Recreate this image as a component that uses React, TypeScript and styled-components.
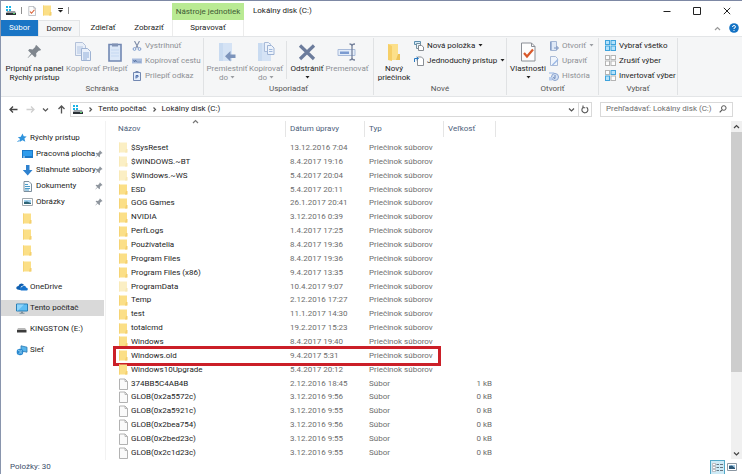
import React from 'react';
import styled, { createGlobalStyle, css } from 'styled-components';

const GlobalStyle = createGlobalStyle`
  * { box-sizing: border-box; }
  body { margin: 0; background: #fff; }
  body, button, input, table {
    font-family: Roboto, "Open Sans", sans-serif;
    font-size: 8px;
    line-height: 10px;
    color: #1c1c1c;
  }
  button { padding: 0; border: 0; background: none; white-space: nowrap; }
  a { color: inherit; text-decoration: none; }
  svg { display: block; flex: none; }
`;

/* ---------- Icons ---------- */

const DriveIcon = () => (
  <svg width="11" height="11" viewBox="0 0 11 11">
    <path d="M1 1h2v2H1zM4 1h2v2H4zM1 4h2v2H1zM4 4h2v2H4z" fill="#19b3e6" />
    <path d="M2 6h8l1 2H1z" fill="#9aa0a6" />
    <path d="M1 8h10v2H1z" fill="#2b3036" />
    <path d="M8 8h2v1H8z" fill="#59d36b" />
  </svg>
);

const CheckDocIcon = ({ size = 10 }: { size?: number }) => (
  <svg width={size} height={size} viewBox="0 0 20 20">
    <path d="M3.500 1h10L17 4.500V19H3.500z" fill="#fdfdfd" stroke="#8b8f96" />
    <path d="M13.500 1v3.500H17" fill="none" stroke="#8b8f96" />
    <path d="M6 11l3 3.500 6-7" fill="none" stroke="#d9592b" strokeWidth="2.200" />
  </svg>
);

const FolderIcon = ({ pale = false }: { pale?: boolean }) => (
  <svg width="11" height="11" viewBox="0 0 11 11">
    <path d="M1 .5h8v10H1z" fill={pale ? '#fbefc4' : '#fbdf87'} />
    <path d="M1 .5h1v10H1z" fill={pale ? '#f9eab8' : '#f6d474'} />
    <path d="M8 7h1.500v3.500H7z" fill={pale ? '#f8e8b4' : '#f4cf6c'} />
  </svg>
);

const BigFolderIcon = () => (
  <svg width="14" height="20" viewBox="0 0 14 20">
    <path d="M1 2h10v10h2v6H1z" fill="#fce08b" />
    <path d="M1 2l4 2v15l-4-1z" fill="#f6cf68" />
    <path d="M11 12h2v6h-4z" fill="#edc35a" />
  </svg>
);

const FileIcon = () => (
  <svg width="11" height="12" viewBox="0 0 11 12">
    <path d="M1.500 1h5.500l2.500 2.500v8h-8z" fill="#fafafa" stroke="#a9a9a9" strokeWidth=".9" />
    <path d="M7 1v2.500h2.500" fill="none" stroke="#a9a9a9" strokeWidth=".8" />
  </svg>
);

const PinIcon = ({ size = 8, color = '#8f969e' }: { size?: number; color?: string }) => (
  <svg width={size} height={size} viewBox="0 0 16 16">
    <path d="M10 1l5 5-1.200 1.200-1-.3-3 3 .2 3-1.400 1.400L5.200 10.800 1 15l-.300-.300 3.700-4.700L1.200 6.800 2.600 5.400l3.400.4 3-3L8.800 2z" fill={color} />
  </svg>
);

const CopyIcon = () => (
  <svg width="18" height="20" viewBox="0 0 18 20">
    <path d="M1.500.5h7l3 3v10h-10z" fill="#e9eff8" stroke="#b3c1d9" />
    <path d="M3 5h6M3 7h6M3 9h5M3 11h5" stroke="#b3c6e4" />
    <path d="M7.500 6.500h6l3 3v9h-9z" fill="#eaf1fb" stroke="#9fb3d3" />
    <path d="M9 11h6M9 13h6M9 15h6M9 17h4" stroke="#8fadd9" />
  </svg>
);

const PasteIcon = () => (
  <svg width="14" height="20" viewBox="0 0 14 20">
    <path d="M1 2.500h12V19H1z" fill="#dce8f8" stroke="#7288b2" strokeWidth="1.600" />
    <path d="M4 1.500h6v3H4z" fill="#8193b5" />
    <path d="M3 8h8M3 11h8M3 14h8" stroke="#c5d8f1" />
  </svg>
);

const CutIcon = () => (
  <svg width="10" height="10" viewBox="0 0 10 10">
    <path d="M2.500 0l3.700 7M7.500 0L3.800 7" stroke="#7e8ca8" strokeWidth="1.100" fill="none" />
    <circle cx="2.500" cy="8" r="1.400" fill="none" stroke="#7e9cce" />
    <circle cx="7.500" cy="8" r="1.400" fill="none" stroke="#7e9cce" />
  </svg>
);

const PathIcon = () => (
  <svg width="10" height="10" viewBox="0 0 10 10">
    <path d="M0 2.500h10v5H0z" fill="#a9bcdd" />
    <path d="M1.500 4l1 2 1-2 1 2M5.500 6h1M7.500 6h1" stroke="#4d6899" strokeWidth=".8" fill="none" />
  </svg>
);

const PasteLinkIcon = () => (
  <svg width="10" height="10" viewBox="0 0 10 10">
    <path d="M1.500 1.500h7v8h-7z" fill="#e5eefb" stroke="#7288b2" />
    <path d="M3.500 0h3v2h-3z" fill="#7288b2" />
    <path d="M4 7.500V4.500h2v1.500H4" stroke="#4d6fac" fill="none" />
  </svg>
);

const MoveIcon = () => (
  <svg width="18" height="20" viewBox="0 0 18 20">
    <path d="M1 1h13v18H1z" fill="#d5e3f5" />
    <path d="M1 1h4v18H1z" fill="#c9dbf1" />
    <path d="M7 14.200L12.500 9v3.500H17.500v3.500H12.500v3.500z" fill="#7d94bb" />
  </svg>
);

const CopyToIcon = () => (
  <svg width="18" height="20" viewBox="0 0 18 20">
    <path d="M1 1h13v18H1z" fill="#d5e3f5" />
    <path d="M1 1h4v18H1z" fill="#c9dbf1" />
    <path d="M7.500.5h4l2 2v7h-6z" fill="#edf3fb" stroke="#a9bbd8" />
    <path d="M10.500 3.500h4l2.500 2.500v6.500h-6.500z" fill="#edf3fb" stroke="#9eb3d5" />
    <path d="M12 7.500h3.500M12 9.500h3.500" stroke="#a0b8dc" />
  </svg>
);

const DeleteIcon = () => (
  <svg width="18" height="20" viewBox="0 0 18 20">
    <path d="M2 3.500L16 17M16 3.500L2 17" stroke="#6c7c9c" strokeWidth="3.200" />
  </svg>
);

const RenameIcon = () => (
  <svg width="20" height="20" viewBox="0 0 20 20">
    <path d="M1 7.500h17v6H1z" fill="#e4edf9" stroke="#a9bbda" />
    <path d="M3 9.500h9v2.500H3z" fill="#7c9bd0" />
    <path d="M12.500 2q2.500 0 2.500 2v12q0 2-2.500 2M18 2q-3 0-3 2M18 18q-3 0-3-2" stroke="#74809a" strokeWidth="1.300" fill="none" />
  </svg>
);

const NewItemIcon = () => (
  <svg width="10" height="10" viewBox="0 0 10 10">
    <path d="M.5.5h6v3h-6z" fill="#d6ebf8" stroke="#5c8fae" />
    <path d="M2.500 2.500h4v5h-4z" fill="#e9f4fb" stroke="#77909f" />
    <path d="M4.500 4.500h3l2 1.500v3.500h-5z" fill="#fff" stroke="#868b90" />
  </svg>
);

const EasyAccessIcon = () => (
  <svg width="10" height="10" viewBox="0 0 10 10">
    <path d="M3.500 1h4l2 2v6.500h-6z" fill="#fff" stroke="#8a8f95" />
    <path d="M.5 6V2.500H4M2.500 1L4.500 2.500 2.500 4" stroke="#2b7ac2" fill="none" />
  </svg>
);

const OpenIcon = () => (
  <svg width="10" height="10" viewBox="0 0 10 10">
    <path d="M1.500.5h6v9h-6z" fill="#dfe9f7" stroke="#a4b6d4" />
    <path d="M1 2h2M1 4h2M1 6h2M1 8h2" stroke="#6b88ba" />
    <path d="M5 7h4M7.500 5L9.500 7 7.500 9" stroke="#7892bf" fill="none" />
  </svg>
);

const EditIcon = () => (
  <svg width="10" height="10" viewBox="0 0 10 10">
    <path d="M1.500.5h5l2 2v7h-7z" fill="#f0f5fc" stroke="#a9bad6" />
    <path d="M3 8.500L8.500 3l1 1L4 9.500H3z" fill="#9db9e5" />
  </svg>
);

const HistoryIcon = () => (
  <svg width="10" height="10" viewBox="0 0 10 10">
    <path d="M0 1h5l1 2H0z" fill="#c4d5ee" />
    <circle cx="6" cy="6" r="3.500" fill="#d6e3f5" stroke="#8aa3cf" />
    <path d="M4 6.500l2 1V4" stroke="#6a86b7" fill="none" />
    <path d="M0 6h3v3.500H0z" fill="#b9cdec" />
  </svg>
);

const SelectIcon = ({ kind }: { kind: 'all' | 'none' | 'invert' }) => {
  const on = { fill: '#b5e2fb', stroke: '#3fa3dc' };
  const off = { fill: '#fdfdfd', stroke: '#b4b4b4' };
  const cell = (lit: boolean) => (lit ? on : off);
  return (
    <svg width="11" height="11" viewBox="0 0 11 11">
      <rect x=".5" y=".5" width="4" height="4" {...cell(kind === 'all')} />
      <rect x="6" y=".5" width="4.500" height="4" {...cell(kind !== 'none')} />
      <rect x=".5" y="6" width="4" height="4.500" {...cell(kind !== 'none')} />
      <rect x="6" y="6" width="4.500" height="4.500" {...cell(kind === 'all')} />
    </svg>
  );
};

const Caret = ({ color = '#222' }: { color?: string }) => (
  <svg width="5" height="3" viewBox="0 0 5 3">
    <path d="M.5 0h4L2.500 2.500z" fill={color} />
  </svg>
);

const MenuCaret = () => (
  <svg width="5" height="5" viewBox="0 0 5 5">
    <path d="M0 .5h5" stroke="#222" />
    <path d="M0 2h5L2.500 4.500z" fill="#222" />
  </svg>
);

const Chevron = ({ dir, size = 7, color = '#555' }: { dir: 'up' | 'down' | 'right'; size?: number; color?: string }) => {
  const paths = { up: 'M1 5l2.500-2.500L6 5', down: 'M1 2.500L3.500 5 6 2.500', right: 'M2.500 1.500L4.500 3.500l-2 2' };
  return (
    <svg width={size} height={size} viewBox="0 0 7 7">
      <path d={paths[dir]} fill="none" stroke={color} strokeWidth="1.200" />
    </svg>
  );
};

const Arrow = ({ dir, color }: { dir: 'left' | 'right' | 'up'; color: string }) => {
  const paths = {
    left: 'M8.500 4.500H1M4 1.500l-3 3 3 3',
    right: 'M.5 4.500H8M5 1.500l3 3-3 3',
    up: 'M4.500 8.500V1M1.500 4l3-3 3 3',
  };
  return (
    <svg width="9" height="9" viewBox="0 0 9 9">
      <path d={paths[dir]} fill="none" stroke={color} strokeWidth="1.300" />
    </svg>
  );
};

const RefreshIcon = () => (
  <svg width="8" height="9" viewBox="0 0 8 9">
    <path d="M5.500 2.300A3 3 0 1 1 2 2.500M2 .5v2.300h2.300" fill="none" stroke="#555" strokeWidth="1.100" />
  </svg>
);

const SearchIcon = () => (
  <svg width="8" height="8" viewBox="0 0 8 8">
    <circle cx="4.800" cy="3" r="2.300" fill="none" stroke="#555" />
    <path d="M3 4.800L.7 7.300" stroke="#555" strokeWidth="1.200" />
  </svg>
);

const StarIcon = () => (
  <svg width="10" height="10" viewBox="0 0 10 10">
    <path d="M5.500.5l1.200 2.800 3 .2-2.300 2 .9 3.200-2.800-1.500L2.500 9l.6-3L.8 4.300l3-.6z" fill="#2f93dc" />
    <path d="M3 6.500L.5 9" stroke="#2f93dc" />
  </svg>
);

const DesktopIcon = () => (
  <svg width="11" height="10" viewBox="0 0 11 10">
    <path d="M0 1h11v8H0z" fill="#1b78c8" />
    <path d="M1 2h9v5H1z" fill="#2f9cec" />
    <path d="M1 8h2" stroke="#d8ecfb" />
  </svg>
);

const DownloadIcon = () => (
  <svg width="11" height="11" viewBox="0 0 11 11">
    <path d="M4 0h3.500v5h3L5.700 10.500.8 5H4z" fill="#2f82cf" />
  </svg>
);

const DocumentIcon = () => (
  <svg width="11" height="11" viewBox="0 0 11 11">
    <path d="M2 .5h5L9.500 3v7.500H2z" fill="#f7fbfe" stroke="#7d8f9d" />
    <path d="M3 3.500h3M3 5.500h5M3 7.500h5M3 9h4" stroke="#4a9cc9" />
  </svg>
);

const PictureIcon = () => (
  <svg width="11" height="10" viewBox="0 0 11 10">
    <path d="M.5 1.500h10v7H.5z" fill="#fff" stroke="#a1a8ad" />
    <path d="M2 3h7v4H2z" fill="#9fd0ee" />
    <path d="M2 5l3-.5L9 6v1H2z" fill="#2f6475" />
  </svg>
);

const CloudIcon = () => (
  <svg width="12" height="8" viewBox="0 0 12 8">
    <path d="M1.500 6.500Q0 6 .3 4.500T2.500 3Q3 .5 5.300.5T8 2L5 3.500 4 7z" fill="#0f5fb0" />
    <path d="M5 7.500Q3.500 7 4 5.500T6 4Q7 2.300 8.600 2.800T10 4.500q2 .2 1.800 1.700T10.500 7.500z" fill="#1673cc" />
  </svg>
);

const ComputerIcon = () => (
  <svg width="12" height="11" viewBox="0 0 12 11">
    <path d="M.5 1h11v7H.5z" fill="#5fbdf3" stroke="#2a7fb5" />
    <path d="M1 1.500h7l-6 6H1z" fill="#8fd4fa" />
    <path d="M5 8.500h2V10H5zM3.500 9.800h5v.9h-5z" fill="#7f919d" />
  </svg>
);

const UsbIcon = () => (
  <svg width="11" height="10" viewBox="0 0 11 10">
    <path d="M2 4h7l1.500 2H1z" fill="#b8b8b8" />
    <path d="M1 6h9.500v2.500H1z" fill="#3c3c3c" />
  </svg>
);

const NetworkIcon = () => (
  <svg width="12" height="11" viewBox="0 0 12 11">
    <path d="M5 .8l6 1.400v5L5 6z" fill="#58b4ea" stroke="#2b79b3" strokeWidth=".8" />
    <circle cx="4" cy="7" r="3.300" fill="#2a88cf" />
    <path d="M2 5q2 2 4 .8M2.500 9q1-2 3.500-1" stroke="#9fdcf8" fill="none" strokeWidth=".9" />
  </svg>
);

const DetailsIcon = () => (
  <svg width="11" height="9" viewBox="0 0 11 9">
    <path d="M.5.5h3v2h-3zM.5 3.500h3v2h-3zM.5 6.500h3v2h-3z" fill="#fff" stroke="#a29aa0" strokeWidth=".6" />
    <path d="M4.500 1.500h2.500M8 1.500h3M4.500 4.500h2.500M8 4.500h3M4.500 7.500h2.500M8 7.500h3" stroke="#66747f" />
  </svg>
);

const TilesIcon = () => (
  <svg width="10" height="8" viewBox="0 0 10 8">
    <path d="M.5.5h9v7h-9z" fill="#fff" stroke="#8b98a3" />
    <path d="M2 2h6v4H2z" fill="#a9cfe8" />
    <path d="M2 3l3-.5L8 5v1H2z" fill="#2d5878" />
  </svg>
);

/* ---------- Window and title area ---------- */

const Window = styled.main`
  display: flex;
  flex-direction: column;
  height: 100vh;
  min-width: 700px;
  border-top: 1px solid #7d88a4;
  border-left: 1px solid #8995ad;
  background: #fff;
`;

const Header = styled.header`
  display: flex;
  height: 35px;
  flex: none;
`;

const TabSide = styled.div`
  width: 171px;
`;

const QuickBar = styled.div`
  display: flex;
  align-items: center;
  gap: 5px;
  height: 19px;
  padding-left: 4px;
`;

const Rule = styled.span`
  width: 1px;
  height: 7px;
  background: #8f8f8f;
`;

const IconButton = styled.button`
  display: flex;
  align-items: center;
  justify-content: center;
`;

const TabRow = styled.div`
  display: flex;
  height: 16px;
`;

const Tab = styled.button<{ $kind?: 'file' | 'active' }>`
  width: ${(p) => (p.$kind === 'file' ? 37 : p.$kind === 'active' ? 42 : 46)}px;
  ${(p) => p.$kind === 'file' && css`background: #1a75c5; color: #fff;`}
  ${(p) =>
    p.$kind === 'active' &&
    css`
      background: #f5f6f7;
      border: 1px solid #e2e4e6;
      border-bottom: 0;
    `}
`;

const ContextTab = styled.div`
  display: flex;
  flex-direction: column;
  width: 72px;
  padding-top: 2px;
`;

const ContextTitle = styled.div`
  height: 17px;
  line-height: 17px;
  background: #b9ea93;
  color: #3f5a35;
  text-align: center;
  white-space: nowrap;
`;

const ContextButton = styled.button`
  flex: 1;
  border: solid #ececec;
  border-width: 0 1px;
`;

const TitleSide = styled.div`
  flex: 1;
`;

const TitleRow = styled.div`
  display: flex;
  align-items: center;
  height: 19px;
  padding-left: 9px;
`;

const Title = styled.h1`
  flex: 1;
  margin: 0;
  font-size: 8px;
  font-weight: 400;
`;

const WindowButton = styled(IconButton)`
  width: 30px;
  height: 18px;
`;

const HelpRow = styled.div`
  display: flex;
  align-items: center;
  justify-content: flex-end;
  gap: 8px;
  height: 16px;
  padding-right: 3px;
`;

/* ---------- Ribbon ---------- */

const Ribbon = styled.div`
  display: flex;
  flex: none;
  height: 61px;
  background: #f5f6f7;
  border: solid #e3e5e7;
  border-width: 1px 0;
`;

const Group = styled.section<{ $width: number }>`
  display: flex;
  flex-direction: column;
  width: ${(p) => p.$width}px;
  margin: 1px 0;
  border-right: 1px solid #e0e2e4;
`;

const Tools = styled.div`
  display: flex;
  flex: 1;
  padding-left: 3px;
`;

const GroupName = styled.h2`
  height: 12px;
  margin: 0;
  font-size: 8px;
  font-weight: 400;
  line-height: 12px;
  color: #555;
  text-align: center;
`;

const BigButton = styled.button<{ $width: number; $off?: boolean }>`
  display: flex;
  flex: none;
  flex-direction: column;
  align-items: center;
  width: ${(p) => p.$width}px;
  padding-top: 3px;
  line-height: 9px;
  color: ${(p) => (p.$off ? '#8d9095' : '#1c1c1c')};
`;

const BigIcon = styled.span`
  display: flex;
  align-items: center;
  justify-content: center;
  height: 21px;
  margin-bottom: 2px;
`;

const Line = styled.span`
  display: flex;
  align-items: center;
  justify-content: center;
  gap: 2px;
  height: 9px;
`;

const SmallStack = styled.div`
  display: flex;
  flex-direction: column;
  align-items: flex-start;
  padding-left: 3px;
`;

const SmallButton = styled.button<{ $off?: boolean }>`
  display: flex;
  align-items: center;
  gap: 3px;
  height: 15px;
  color: ${(p) => (p.$off ? '#8d9095' : '#1c1c1c')};
`;

const ToolRule = styled.span`
  width: 1px;
  height: 38px;
  margin: 3px 1px 0;
  background: #e0e2e4;
`;

/* ---------- Address row ---------- */

const AddressRow = styled.div`
  display: flex;
  align-items: center;
  flex: none;
  height: 24px;
  padding-right: 9px;
`;

const NavButtons = styled.div`
  display: flex;
  align-items: center;
  justify-content: space-between;
  width: 69px;
  padding: 0 4px 0 8px;
`;

const PathBox = styled.nav`
  display: flex;
  align-items: center;
  flex: 1;
  gap: 4px;
  height: 15px;
  padding-left: 1px;
  border: 1px solid #d9d9d9;
`;

const PathEnd = styled.span`
  display: flex;
  align-items: center;
  height: 100%;
  margin-left: auto;
`;

const RefreshButton = styled(IconButton)`
  width: 13px;
  height: 13px;
  margin-left: 3px;
  border-left: 1px solid #d9d9d9;
`;

const SearchBox = styled.label`
  display: flex;
  align-items: center;
  width: 133px;
  height: 15px;
  margin-left: 8px;
  padding: 0 5px;
  border: 1px solid #d9d9d9;
`;

const SearchInput = styled.input`
  flex: 1;
  min-width: 0;
  padding: 0;
  border: 0;
  outline: 0;
  background: none;
  &::placeholder { color: #6d6d6d; opacity: 1; }
`;

/* ---------- Body ---------- */

const Body = styled.div`
  display: flex;
  flex: 1;
  min-height: 0;
`;

const Sidebar = styled.nav`
  width: 105px;
  flex: none;
  padding-top: 9px;
  border-right: 1px solid #f2f2f2;
`;

const SideList = styled.ul`
  margin: 0;
  padding: 0;
  list-style: none;
`;

const SideLink = styled.a<{ $nested?: boolean; $spaced?: boolean; $selected?: boolean }>`
  display: flex;
  align-items: center;
  gap: 3px;
  height: 16px;
  margin-right: 1px;
  margin-top: ${(p) => (p.$spaced ? 5 : 0)}px;
  padding-left: ${(p) => (p.$nested ? 21 : 15)}px;
  background: ${(p) => (p.$selected ? '#d9d9d9' : 'none')};
`;

const SideIcon = styled.span`
  display: flex;
  justify-content: center;
  width: 11px;
`;

const SideText = styled.span<{ $pinned?: boolean }>`
  width: ${(p) => (p.$pinned ? '56px' : 'auto')};
  white-space: nowrap;
`;

const Content = styled.section`
  flex: 1;
  min-width: 0;
  padding-left: 7px;
`;

const FileTable = styled.table`
  height: 100%;
  border-collapse: collapse;
  table-layout: fixed;
  width: 383px;
`;

const HeadCell = styled.th<{ $width: number }>`
  width: ${(p) => p.$width}px;
  height: 20px;
  padding: 0;
  vertical-align: top;
  text-align: left;
  font-weight: 400;
`;

const HeadButton = styled.button<{ $first?: boolean }>`
  position: relative;
  display: block;
  width: 100%;
  height: 16px;
  padding-left: ${(p) => (p.$first ? 5 : 4)}px;
  border-right: 1px solid #e5e5e5;
  text-align: left;
  color: #4c607a;
`;

const SortMark = styled.span`
  position: absolute;
  top: -3px;
  left: 46%;
`;

const FileRow = styled.tr`
  position: relative;
`;

const Cell = styled.td<{ $right?: boolean }>`
  padding: 0 ${(p) => (p.$right ? 4 : 0)}px 0 4px;
  color: #6d6d6d;
  text-align: ${(p) => (p.$right ? 'right' : 'left')};
  white-space: nowrap;
`;

const NameCell = styled.td`
  padding: 0 0 0 5px;
`;

const FileName = styled.a`
  display: flex;
  align-items: center;
  gap: 2px;
  height: 12px;
  white-space: nowrap;
`;

const Highlight = styled.span`
  position: absolute;
  top: -3px;
  bottom: -3px;
  left: 0;
  width: 328px;
  border: 3px solid #cb1f28;
  pointer-events: none;
`;

const ScrollBar = styled.div`
  display: flex;
  flex-direction: column;
  flex: none;
  width: 11px;
  margin-bottom: 1px;
  background: #f0f0f0;
`;

const ScrollButton = styled(IconButton)`
  height: 11px;
`;

const ScrollTrack = styled.div`
  flex: 1;
`;

const ScrollThumb = styled.div`
  height: 76%;
  background: #cdcdcd;
`;

const StatusBar = styled.footer`
  display: flex;
  align-items: center;
  flex: none;
  height: 14px;
  padding: 0 5px 0 9px;
  color: #3d4f6b;
`;

const ViewButtons = styled.div`
  display: flex;
  align-items: center;
  gap: 2px;
  margin-left: auto;
`;

const ViewButton = styled(IconButton)<{ $on?: boolean }>`
  height: 15px;
  width: ${(p) => (p.$on ? 15 : 10)}px;
  ${(p) => p.$on && css`border: 1px solid #52a8c8; background: #cdeaf6;`}
`;

/* ---------- Data ---------- */

type Entry = { name: string; date: string; size?: string; pale?: boolean; marked?: boolean };

const entries: Entry[] = [
  { name: '$SysReset', date: '13.12.2016 7:04', pale: true },
  { name: '$WINDOWS.~BT', date: '8.4.2017 19:16', pale: true },
  { name: '$Windows.~WS', date: '5.4.2017 20:04', pale: true },
  { name: 'ESD', date: '5.4.2017 20:11' },
  { name: 'GOG Games', date: '26.1.2017 20:41' },
  { name: 'NVIDIA', date: '3.12.2016 0:39' },
  { name: 'PerfLogs', date: '1.4.2017 17:25' },
  { name: 'Používatelia', date: '8.4.2017 19:36' },
  { name: 'Program Files', date: '8.4.2017 19:36' },
  { name: 'Program Files (x86)', date: '9.4.2017 13:35' },
  { name: 'ProgramData', date: '10.4.2017 9:07', pale: true },
  { name: 'Temp', date: '2.12.2016 17:27' },
  { name: 'test', date: '11.1.2017 14:30' },
  { name: 'totalcmd', date: '19.2.2017 15:23' },
  { name: 'Windows', date: '8.4.2017 19:40' },
  { name: 'Windows.old', date: '9.4.2017 5:31', marked: true },
  { name: 'Windows10Upgrade', date: '5.4.2017 20:12' },
  { name: '374BB5C4AB4B', date: '2.12.2016 18:45', size: '1 kB' },
  { name: 'GLOB(0x2a5572c)', date: '3.12.2016 9:56', size: '0 kB' },
  { name: 'GLOB(0x2a5921c)', date: '3.12.2016 9:55', size: '0 kB' },
  { name: 'GLOB(0x2bea754)', date: '3.12.2016 9:56', size: '0 kB' },
  { name: 'GLOB(0x2bed23c)', date: '3.12.2016 9:55', size: '0 kB' },
  { name: 'GLOB(0x2c1d23c)', date: '3.12.2016 9:55', size: '0 kB' },
];

type Place = {
  label: string;
  icon: React.ReactNode;
  nested?: boolean;
  pinned?: boolean;
  spaced?: boolean;
  selected?: boolean;
};

const places: Place[] = [
  { label: 'Rýchly prístup', icon: <StarIcon /> },
  { label: 'Pracovná plocha', icon: <DesktopIcon />, nested: true, pinned: true },
  { label: 'Stiahnuté súbory', icon: <DownloadIcon />, nested: true, pinned: true },
  { label: 'Dokumenty', icon: <DocumentIcon />, nested: true, pinned: true },
  { label: 'Obrázky', icon: <PictureIcon />, nested: true, pinned: true },
  { label: '', icon: <FolderIcon />, nested: true },
  { label: '', icon: <FolderIcon />, nested: true },
  { label: '', icon: <FolderIcon />, nested: true },
  { label: '', icon: <FolderIcon />, nested: true },
  { label: 'OneDrive', icon: <CloudIcon />, spaced: true },
  { label: 'Tento počítač', icon: <ComputerIcon />, spaced: true, selected: true },
  { label: 'KINGSTON (E:)', icon: <UsbIcon />, spaced: true },
  { label: 'Sieť', icon: <NetworkIcon />, spaced: true },
];

/* ---------- Composed parts ---------- */

type BigToolProps = {
  icon: React.ReactNode;
  width: number;
  label: string;
  second?: string;
  caret?: boolean;
  off?: boolean;
};

const BigTool = ({ icon, width, label, second, caret, off }: BigToolProps) => (
  <BigButton $width={width} $off={off}>
    <BigIcon>{icon}</BigIcon>
    <Line>{label}</Line>
    {(second || caret) && (
      <Line>
        {second}
        {caret && <Caret color={off ? '#9a9da2' : '#222'} />}
      </Line>
    )}
  </BigButton>
);

type SmallToolProps = { icon: React.ReactNode; label: string; caret?: boolean; off?: boolean };

const SmallTool = ({ icon, label, caret, off }: SmallToolProps) => (
  <SmallButton $off={off}>
    {icon}
    {label}
    {caret && <Caret color={off ? '#9a9da2' : '#222'} />}
  </SmallButton>
);

export default function App() {
  return (
    <>
      <GlobalStyle />
      <Window>
        <Header>
          <TabSide>
            <QuickBar>
              <DriveIcon />
              <Rule />
              <IconButton aria-label="Vlastnosti"><CheckDocIcon /></IconButton>
              <IconButton aria-label="Nový priečinok"><FolderIcon /></IconButton>
              <IconButton aria-label="Prispôsobiť panel"><MenuCaret /></IconButton>
              <Rule />
            </QuickBar>
            <TabRow>
              <Tab $kind="file">Súbor</Tab>
              <Tab $kind="active">Domov</Tab>
              <Tab>Zdieľať</Tab>
              <Tab>Zobraziť</Tab>
            </TabRow>
          </TabSide>
          <ContextTab>
            <ContextTitle>Nástroje jednotiek</ContextTitle>
            <ContextButton>Spravovať</ContextButton>
          </ContextTab>
          <TitleSide>
            <TitleRow>
              <Title>Lokálny disk (C:)</Title>
              <WindowButton aria-label="Minimalizovať">
                <svg width="8" height="8" viewBox="0 0 8 8"><path d="M.5 4.500h7" stroke="#222" /></svg>
              </WindowButton>
              <WindowButton aria-label="Maximalizovať">
                <svg width="8" height="8" viewBox="0 0 8 8"><path d="M.5.5h7v7h-7z" fill="none" stroke="#222" /></svg>
              </WindowButton>
              <WindowButton aria-label="Zavrieť">
                <svg width="8" height="8" viewBox="0 0 8 8"><path d="M.8.8l6.400 6.400M7.200.8L.8 7.200" stroke="#222" /></svg>
              </WindowButton>
            </TitleRow>
            <HelpRow>
              <IconButton aria-label="Zbaliť pás"><Chevron dir="up" color="#999" /></IconButton>
              <IconButton aria-label="Pomocník">
                <svg width="10" height="10" viewBox="0 0 10 10">
                  <circle cx="5" cy="5" r="4.800" fill="#1372c4" />
                  <path d="M3.500 4q0-1.500 1.500-1.500T6.500 3.800 5 5.200v.8M5 7v1" stroke="#fff" fill="none" />
                </svg>
              </IconButton>
            </HelpRow>
          </TitleSide>
        </Header>

        <Ribbon>
          <Group $width={203}>
            <Tools>
              <BigTool icon={<PinIcon size={15} color="#7f868e" />} width={61} label="Pripnúť na panel" second="Rýchly prístup" />
              <BigTool icon={<CopyIcon />} width={36} label="Kopírovať" off />
              <BigTool icon={<PasteIcon />} width={28} label="Prilepiť" off />
              <SmallStack>
                <SmallTool icon={<CutIcon />} label="Vystrihnúť" off />
                <SmallTool icon={<PathIcon />} label="Kopírovať cestu" off />
                <SmallTool icon={<PasteLinkIcon />} label="Prilepiť odkaz" off />
              </SmallStack>
            </Tools>
            <GroupName>Schránka</GroupName>
          </Group>
          <Group $width={170}>
            <Tools>
              <BigTool icon={<MoveIcon />} width={40} label="Premiestniť" second="do" caret off />
              <BigTool icon={<CopyToIcon />} width={38} label="Kopírovať" second="do" caret off />
              <ToolRule />
              <BigTool icon={<DeleteIcon />} width={38} label="Odstrániť" caret />
              <BigTool icon={<RenameIcon />} width={42} label="Premenovať" off />
            </Tools>
            <GroupName>Usporiadať</GroupName>
          </Group>
          <Group $width={133}>
            <Tools>
              <BigTool icon={<BigFolderIcon />} width={34} label="Nový" second="priečinok" />
              <SmallStack>
                <SmallTool icon={<NewItemIcon />} label="Nová položka" caret />
                <SmallTool icon={<EasyAccessIcon />} label="Jednoduchý prístup" caret />
              </SmallStack>
            </Tools>
            <GroupName>Nové</GroupName>
          </Group>
          <Group $width={92}>
            <Tools>
              <BigTool icon={<CheckDocIcon size={20} />} width={36} label="Vlastnosti" caret />
              <SmallStack>
                <SmallTool icon={<OpenIcon />} label="Otvoriť" caret off />
                <SmallTool icon={<EditIcon />} label="Upraviť" off />
                <SmallTool icon={<HistoryIcon />} label="História" off />
              </SmallStack>
            </Tools>
            <GroupName>Otvoriť</GroupName>
          </Group>
          <Group $width={79}>
            <Tools>
              <SmallStack>
                <SmallTool icon={<SelectIcon kind="all" />} label="Vybrať všetko" />
                <SmallTool icon={<SelectIcon kind="none" />} label="Zrušiť výber" />
                <SmallTool icon={<SelectIcon kind="invert" />} label="Invertovať výber" />
              </SmallStack>
            </Tools>
            <GroupName>Vybrať</GroupName>
          </Group>
        </Ribbon>

        <AddressRow>
          <NavButtons>
            <IconButton aria-label="Naspäť"><Arrow dir="left" color="#444" /></IconButton>
            <IconButton aria-label="Dopredu"><Arrow dir="right" color="#cfcfcf" /></IconButton>
            <IconButton aria-label="Posledné umiestnenia"><Chevron dir="down" /></IconButton>
            <IconButton aria-label="Nahor"><Arrow dir="up" color="#555" /></IconButton>
          </NavButtons>
          <PathBox aria-label="Cesta">
            <DriveIcon />
            <Chevron dir="right" />
            <a href="#pc">Tento počítač</a>
            <Chevron dir="right" />
            <a href="#c">Lokálny disk (C:)</a>
            <PathEnd>
              <IconButton aria-label="Predchádzajúce"><Chevron dir="down" /></IconButton>
              <RefreshButton aria-label="Obnoviť"><RefreshIcon /></RefreshButton>
            </PathEnd>
          </PathBox>
          <SearchBox>
            <SearchInput type="text" aria-label="Hľadať" placeholder="Prehľadávať: Lokálny disk (C:)" />
            <SearchIcon />
          </SearchBox>
        </AddressRow>

        <Body>
          <Sidebar aria-label="Umiestnenia">
            <SideList>
              {places.map((p, i) => (
                <li key={i}>
                  <SideLink href="#" $nested={p.nested} $spaced={p.spaced} $selected={p.selected} aria-label={p.label || 'Priečinok'}>
                    <SideIcon>{p.icon}</SideIcon>
                    <SideText $pinned={p.pinned}>{p.label}</SideText>
                    {p.pinned && <PinIcon />}
                  </SideLink>
                </li>
              ))}
            </SideList>
          </Sidebar>
          <Content>
            <FileTable>
              <thead>
                <tr>
                  <HeadCell $width={173}>
                    <HeadButton $first>
                      Názov
                      <SortMark><Chevron dir="up" color="#777" /></SortMark>
                    </HeadButton>
                  </HeadCell>
                  <HeadCell $width={79}><HeadButton>Dátum úpravy</HeadButton></HeadCell>
                  <HeadCell $width={79}><HeadButton>Typ</HeadButton></HeadCell>
                  <HeadCell $width={52}><HeadButton>Veľkosť</HeadButton></HeadCell>
                </tr>
              </thead>
              <tbody>
                {entries.map((e) => (
                  <FileRow key={e.name}>
                    <NameCell>
                      <FileName href="#">
                        {e.size ? <FileIcon /> : <FolderIcon pale={e.pale} />}
                        {e.name}
                      </FileName>
                      {e.marked && <Highlight />}
                    </NameCell>
                    <Cell>{e.date}</Cell>
                    <Cell>{e.size ? 'Súbor' : 'Priečinok súborov'}</Cell>
                    <Cell $right>{e.size}</Cell>
                  </FileRow>
                ))}
              </tbody>
            </FileTable>
          </Content>
          <ScrollBar>
            <ScrollButton aria-label="Posunúť nahor"><Chevron dir="up" color="#444" /></ScrollButton>
            <ScrollTrack><ScrollThumb /></ScrollTrack>
            <ScrollButton aria-label="Posunúť nadol"><Chevron dir="down" color="#444" /></ScrollButton>
          </ScrollBar>
        </Body>

        <StatusBar>
          Položky: 30
          <ViewButtons>
            <ViewButton $on aria-label="Podrobnosti"><DetailsIcon /></ViewButton>
            <ViewButton aria-label="Veľké ikony"><TilesIcon /></ViewButton>
          </ViewButtons>
        </StatusBar>
      </Window>
    </>
  );
}
